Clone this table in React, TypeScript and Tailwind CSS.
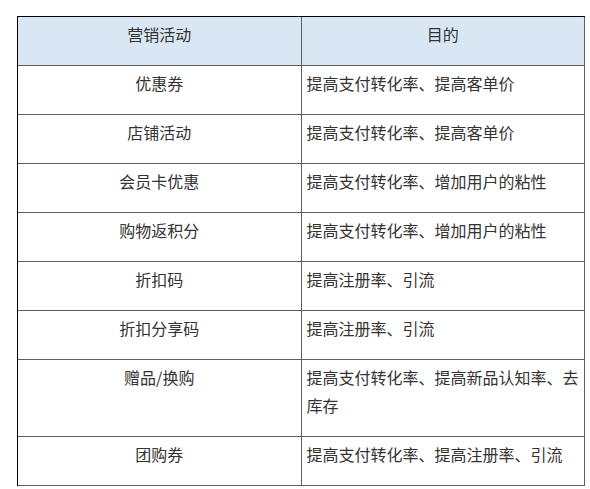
import React from 'react';

const rows: { name: string; goal: string }[] = [
  { name: '优惠券', goal: '提高支付转化率、提高客单价' },
  { name: '店铺活动', goal: '提高支付转化率、提高客单价' },
  { name: '会员卡优惠', goal: '提高支付转化率、增加用户的粘性' },
  { name: '购物返积分', goal: '提高支付转化率、增加用户的粘性' },
  { name: '折扣码', goal: '提高注册率、引流' },
  { name: '折扣分享码', goal: '提高注册率、引流' },
  { name: '赠品/换购', goal: '提高支付转化率、提高新品认知率、去库存' },
  { name: '团购券', goal: '提高支付转化率、提高注册率、引流' },
];

const cell = 'border-r border-b border-[#5e5e5e] pt-[3px] pb-[17px] align-top';

export default function App() {
  return (
    <div
      className="bg-white w-[590px] h-[489px] pl-[17px] pt-[16px] text-[16px] leading-[28px] text-[#333]"
      style={{ fontFamily: '"Noto Sans CJK SC", "Noto Sans", sans-serif' }}
    >
      <div className="w-[568px] border-l border-t border-black">
        <table className="w-full table-fixed border-collapse">
          <thead>
            <tr className="bg-[#d9e7f4]">
              <th className={`${cell} w-[283px] font-normal text-center`}>营销活动</th>
              <th className={`${cell} font-normal text-center`}>目的</th>
            </tr>
          </thead>
          <tbody>
            {rows.map(row => (
              <tr key={row.name}>
                <td className={`${cell} text-center`}>{row.name}</td>
                <td className={`${cell} px-[5px] text-left`}>{row.goal}</td>
              </tr>
            ))}
          </tbody>
        </table>
      </div>
    </div>
  );
}
